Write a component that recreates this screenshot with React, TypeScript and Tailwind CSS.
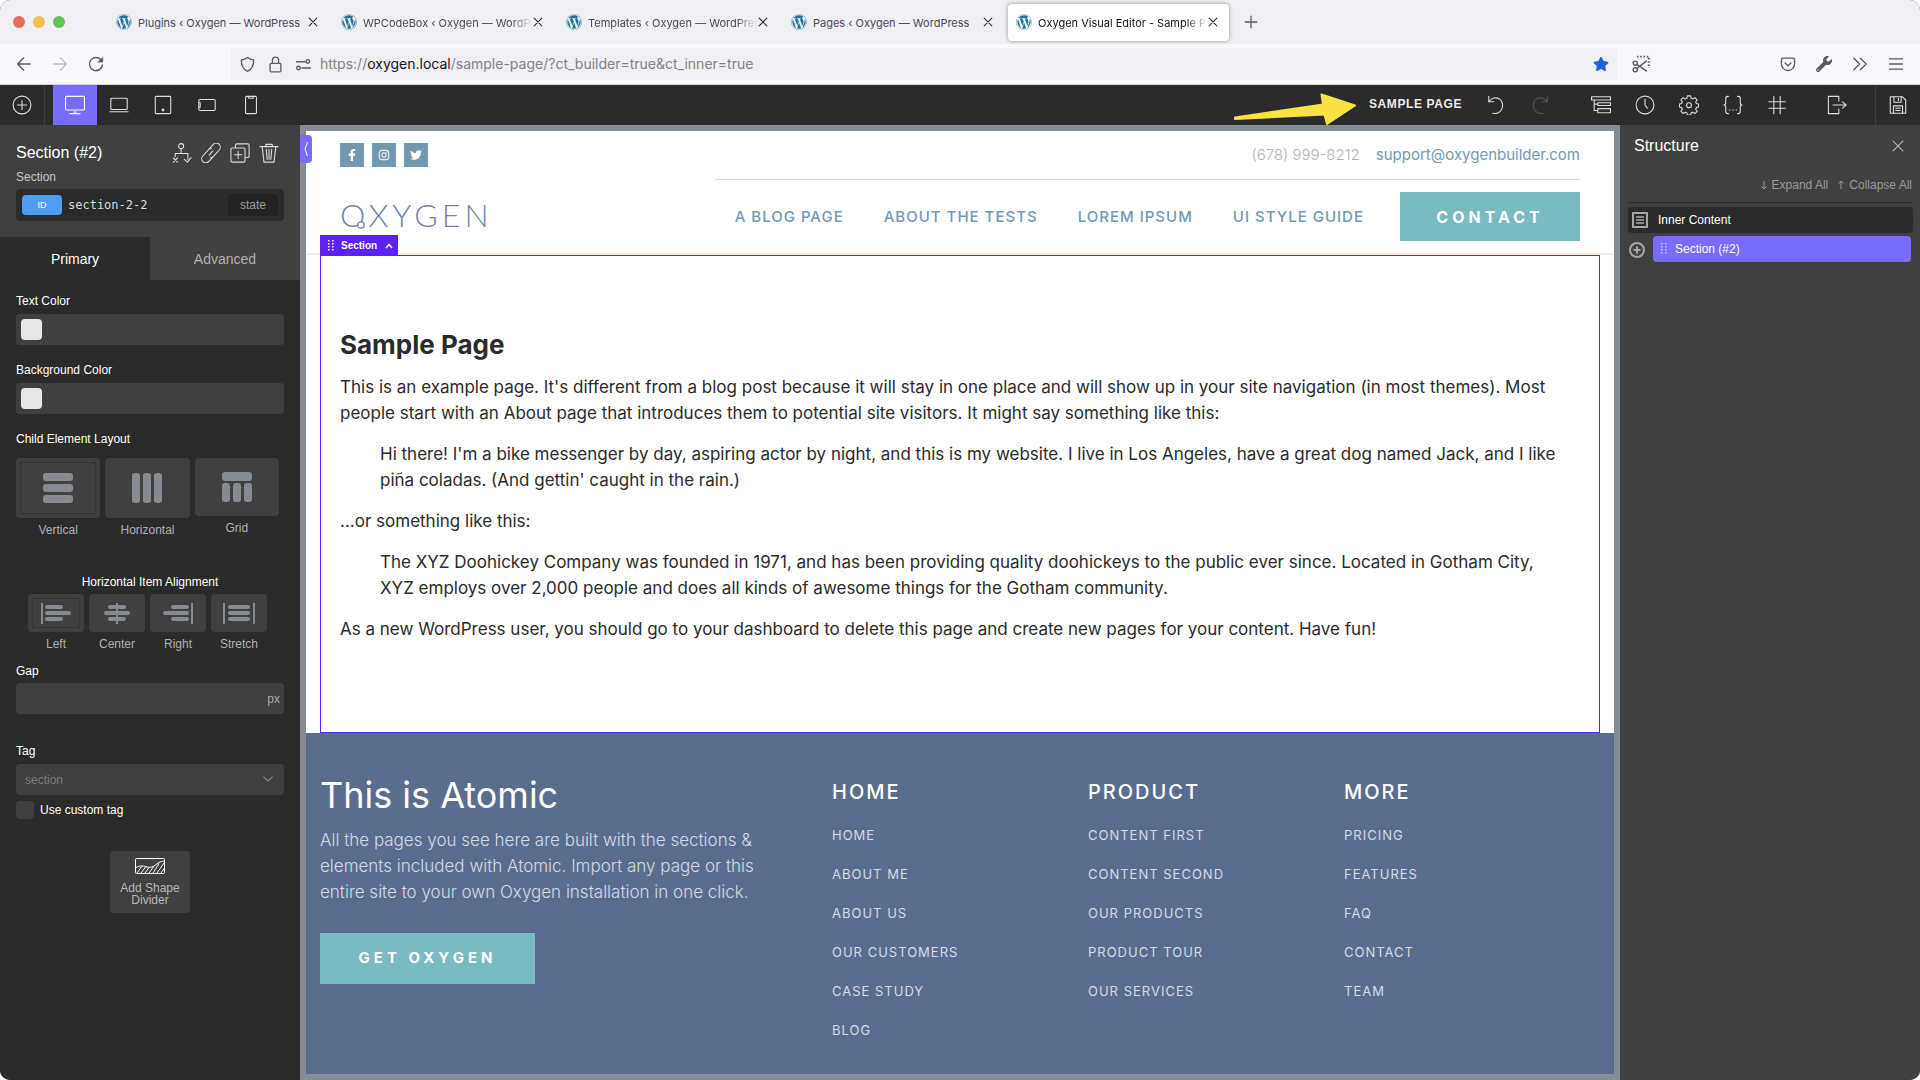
import React from "react";
import { FaWordpress, FaFacebookF, FaInstagram, FaTwitter, FaWrench, FaStar } from "react-icons/fa";

type IconProps = { d: React.ReactNode; size?: string; sw?: number };

function Icon({ d, size = "size-[22px]", sw = 1.2 }: IconProps) {
  return (
    <svg viewBox="0 0 22 22" className={`${size} shrink-0`} fill="none" stroke="currentColor" strokeWidth={sw} strokeLinecap="round" strokeLinejoin="round" aria-hidden="true">
      {d}
    </svg>
  );
}

const tabs = [
  { title: "Plugins ‹ Oxygen — WordPress", active: false, long: false },
  { title: "WPCodeBox ‹ Oxygen — WordPress", active: false, long: true },
  { title: "Templates ‹ Oxygen — WordPress", active: false, long: true },
  { title: "Pages ‹ Oxygen — WordPress", active: false, long: false },
  { title: "Oxygen Visual Editor - Sample Page", active: true, long: true },
];

function TabStrip() {
  return (
    <div className="flex h-11 items-center bg-[#f0eff4] pl-[13px]">
      <div className="mr-[43px] flex gap-2">
        <span className="size-3 rounded-full bg-[#ed6a5e]" />
        <span className="size-3 rounded-full bg-[#f5bf4f]" />
        <span className="size-3 rounded-full bg-[#61c554]" />
      </div>
      <div className="flex gap-1">
        {tabs.map((t) => (
          <div
            key={t.title}
            className={
              t.active
                ? "flex h-[37px] w-[221px] items-center rounded bg-white pl-2 pr-2.5 text-[#15141a] shadow-[0_0_4px_rgba(0,0,0,0.4)]"
                : "flex h-[37px] w-[221px] items-center rounded pl-2 pr-2.5 text-[#4c4b55]"
            }
          >
            <FaWordpress className="size-4 shrink-0 text-[#21759b]" />
            <span
              className={
                t.long
                  ? "ml-1.5 flex-1 overflow-hidden whitespace-nowrap pt-0.5 text-[11px] leading-4 [mask-image:linear-gradient(to_right,black_88%,transparent)]"
                  : "ml-1.5 flex-1 overflow-hidden whitespace-nowrap pt-0.5 text-[11px] leading-4"
              }
            >
              {t.title}
            </span>
            <button aria-label="Close tab" className="text-[#2b2a33]">
              <Icon size="size-3" sw={2} d={<path d="M4 4l14 14M18 4L4 18" />} />
            </button>
          </div>
        ))}
      </div>
      <button aria-label="New tab" className="ml-3.5 text-[#5b5b66]">
        <Icon size="size-4" sw={1.8} d={<path d="M11 3v16M3 11h16" />} />
      </button>
    </div>
  );
}

function AddressBar() {
  return (
    <div className="flex h-[41px] items-center border-b border-[#cfd2d2] bg-[#f9f9fb] pl-3.5 pr-4 text-[#5b5b66]">
      <button aria-label="Back"><Icon size="size-5" sw={1.6} d={<path d="M18 11H4M10.500 4.500L4 11l6.500 6.500" />} /></button>
      <button aria-label="Forward" className="ml-4 text-[#bfbfc9]"><Icon size="size-5" sw={1.6} d={<path d="M4 11h14M11.500 4.500L18 11l-6.500 6.500" />} /></button>
      <button aria-label="Reload" className="ml-4"><Icon size="size-5" sw={1.6} d={<><path d="M17 7A7.200 7.200 0 1 0 18.200 12" /><path d="M18.500 3.500v5.500H13z" fill="currentColor" strokeWidth="0.500" /></>} /></button>
      <div className="ml-[125px] flex h-8 flex-1 items-center rounded bg-[#f0eff4] px-2">
        <Icon size="size-[17px]" sw={1.7} d={<path d="M11 2c2.500 2 5 2.700 8 2.900.200 6.800-1.800 12-8 15.100C4.800 16.900 2.800 11.700 3 4.900 6 4.700 8.500 4 11 2z" />} />
        <span className="ml-[11px]"><Icon size="size-[17px]" sw={1.7} d={<><rect x="4" y="9.500" width="14" height="11" rx="1.500" /><path d="M7 9.500V5.500a4 4 0 0 1 8 0v4" /></>} /></span>
        <span className="ml-[11px]"><Icon size="size-[17px]" sw={1.8} d={<><path d="M2 7.500h11M9 15.500h11" /><circle cx="16.500" cy="7" r="2.300" /><circle cx="4.500" cy="15.500" r="2.300" /></>} /></span>
        <div role="textbox" aria-label="Address" className="ml-2 flex-1 text-sm leading-5 text-[#84838b]">
          https://<span className="text-[#15141a]">oxygen.local</span>/sample-page/?ct_builder=true&amp;ct_inner=true
        </div>
        <button aria-label="Bookmark" className="text-[#2060df]"><FaStar className="size-4" /></button>
      </div>
      <div className="ml-[15px] flex w-[272px] shrink-0 items-center justify-between">
        <button aria-label="Web clipper"><Icon size="size-[18px]" sw={1.8} d={<><circle cx="4" cy="10" r="2.500" /><circle cx="4" cy="18" r="2.500" /><path d="M6 11.500L17.500 19.500M6 16.500L17.500 7.500" /><path d="M6 2h14.500v14" strokeDasharray="2 2" strokeLinecap="butt" strokeWidth="2.400" /></>} /></button>
        <div className="flex items-center gap-5">
          <button aria-label="Pocket"><Icon size="size-4" sw={1.9} d={<><path d="M3.500 3h15A1.500 1.500 0 0 1 20 4.500V11a9 9 0 0 1-18 0V4.500A1.500 1.500 0 0 1 3.500 3z" /><path d="M7 9.500l4 4 4-4" /></>} /></button>
          <button aria-label="Developer tools"><FaWrench className="size-4" /></button>
          <button aria-label="More tools"><Icon size="size-4" sw={1.9} d={<path d="M2.500 3l8 8-8 8M11.500 3l8 8-8 8" />} /></button>
          <button aria-label="Menu"><Icon size="size-4" sw={1.9} d={<path d="M2 4h18M2 11h18M2 18h18" />} /></button>
        </div>
      </div>
    </div>
  );
}

const devices = [
  { name: "Desktop", d: <><rect x="0.600" y="1.500" width="20.800" height="15" rx="1" /><path d="M5.500 20.500h11M10 18.800h2" /></> },
  { name: "Laptop", d: <><rect x="2" y="3.500" width="18" height="12.500" rx="1" /><path d="M1 18.500h20" /></> },
  { name: "Tablet", d: <><rect x="2.500" y="1.500" width="17" height="19" rx="1" /><circle cx="11" cy="16.500" r="1" fill="currentColor" /></> },
  { name: "Phone landscape", d: <><rect x="2" y="5" width="18" height="12" rx="1.200" /><path d="M2 8.500h1.500v5H2" /></> },
  { name: "Phone portrait", d: <><rect x="5" y="1.500" width="12" height="19" rx="1.200" /><path d="M8.500 1.500v2h5v-2" /></> },
];

const panels = [
  { name: "Structure", d: <><path d="M0.600 2h20.800v3.500H0.600z" /><path d="M7.500 8.500h13.900v3H7.500zM7.500 15h13.900v4.500H7.500zM3.500 5.500V17M3.500 10h4M3.500 17h4" /></> },
  { name: "History", d: <><circle cx="11" cy="11" r="9.800" /><path d="M11 4.500V11l2.500 3.500" /></> },
  { name: "Settings", d: <><path d="M9.200 1h3.600l.6 2.700 1.700.7 2.400-1.500 2.400 2.500-1.500 2.300.7 1.700 2.400.6v3.300l-2.400.6-.7 1.700 1.500 2.400-2.400 2.400-2.400-1.500-1.700.700-.6 2.400H9.200l-.6-2.400-1.700-.7-2.400 1.500-2.400-2.400 1.500-2.400-.7-1.700L.500 13.300V10l2.400-.6.7-1.700-1.500-2.300 2.400-2.500 2.400 1.500 1.700-.700z" /><circle cx="11" cy="11.300" r="2.700" /></> },
  { name: "Stylesheets", d: <><path d="M6 1.500H5Q3 1.500 3 4v4.500Q3 11 1 11 3 11 3 13.500V18q0 2.500 2 2.500h1M16 1.500h1q2 0 2 2.500v4.500q0 2.500 2 2.500-2 0-2 2.500V18q0 2.500-2 2.500h-1" /><path d="M7 16.500h.5M10.800 16.500h.5M14.500 16.500h.5" /></> },
  { name: "Grid", d: <path d="M7.500 1.500v19M14.500 1.500v19M2 7.500h18M2 14.500h18" /> },
];

function BuilderBar() {
  return (
    <div className="flex h-10 items-center bg-[#2b2b2b] text-[#dcdcdc]">
      <button aria-label="Add element" className="flex h-10 w-[45px] items-center justify-center border-r border-[#3a3f44]">
        <Icon size="size-5" d={<><circle cx="11" cy="11" r="9.800" /><path d="M11 6v10M6 11h10" /></>} />
      </button>
      <div className="ml-2 flex">
        {devices.map((v, i) => (
          <button key={v.name} aria-label={v.name} className={i === 0 ? "flex h-10 w-11 items-center justify-center bg-[#7a6cfb] text-white" : "flex h-10 w-11 items-center justify-center"}>
            <Icon size="size-5" d={v.d} />
          </button>
        ))}
      </div>
      <svg viewBox="0 0 124 40" className="ml-auto mr-3 h-10 w-[124px]" fill="#fbe243" stroke="#fbe243" strokeWidth="2" strokeLinejoin="round" aria-hidden="true">
        <path d="M2 32.500L90 19.500L88.500 9.500L122 20.500L94 39L91.500 29.500L2 34z" />
      </svg>
      <span className="w-[105px] pb-0.5 font-['Liberation_Sans'] text-xs font-bold leading-4 tracking-wider text-[#ececec]">SAMPLE PAGE</span>
      <button aria-label="Undo" className="flex w-11 justify-center"><Icon size="size-5" d={<path d="M3 1.500v6H8.500M3 7.500C6 3 11 2 15 4.500c5 4 4 12-1.500 15q-3 1.500-6 .5" />} /></button>
      <button aria-label="Redo" className="flex w-11 justify-center text-[#555]"><Icon size="size-5" d={<path d="M19 1.500v6H13.500M19 7.500C16 3 11 2 7 4.500c-5 4-4 12 1.500 15q3 1.500 6 .5" />} /></button>
      <div className="ml-[17px] flex">
        {panels.map((p) => (
          <button key={p.name} aria-label={p.name} className="flex w-11 justify-center"><Icon size="size-5" d={p.d} /></button>
        ))}
      </div>
      <button aria-label="Exit" className="ml-4 flex w-11 justify-center"><Icon size="size-5" d={<><path d="M13 6.500v-5H1.500v19H13v-5" /><path d="M6.500 11H21M17 7.500L21 11l-4 3.500" /></>} /></button>
      <button aria-label="Save" className="ml-4 flex h-10 w-[45px] items-center justify-center border-l border-[#3a3f44]">
        <Icon size="size-5" d={<><path d="M2.500 2h13.500l3.500 3.500V20h-17z" /><path d="M6.500 2v6h8V2M11.500 3.500v2.500M6 20v-8h10v8M8.500 14.500h5M8.500 17h5" /></>} />
      </button>
    </div>
  );
}

const layouts = [
  { name: "Vertical", box: "h-[60px]", d: <><rect x="0" y="0" width="30" height="8" rx="3" /><rect x="0" y="11" width="30" height="8" rx="3" /><rect x="0" y="22" width="30" height="8" rx="3" /></> },
  { name: "Horizontal", box: "h-[60px]", d: <><rect x="0" y="0" width="8" height="30" rx="3" /><rect x="11" y="0" width="8" height="30" rx="3" /><rect x="22" y="0" width="8" height="30" rx="3" /></> },
  { name: "Grid", box: "h-[58px]", d: <><rect x="0" y="0" width="30" height="9" rx="3" /><rect x="0" y="11" width="8" height="19" rx="3" /><rect x="11" y="11" width="8" height="19" rx="3" /><rect x="22" y="11" width="8" height="19" rx="3" /></> },
];

const aligns = [
  { name: "Left", d: <><path d="M1 0h2v21H1z" /><rect x="5" y="2" width="18" height="4" rx="2" /><rect x="5" y="8" width="26" height="4" rx="2" /><rect x="5" y="14" width="18" height="4" rx="2" /></> },
  { name: "Center", d: <><path d="M15 0h2v21h-2z" /><rect x="7" y="2" width="18" height="4" rx="2" /><rect x="3" y="8" width="26" height="4" rx="2" /><rect x="7" y="14" width="18" height="4" rx="2" /></> },
  { name: "Right", d: <><path d="M29 0h2v21h-2z" /><rect x="9" y="2" width="18" height="4" rx="2" /><rect x="1" y="8" width="26" height="4" rx="2" /><rect x="9" y="14" width="18" height="4" rx="2" /></> },
  { name: "Stretch", d: <><path d="M0 0h2v21H0zM30 0h2v21h-2z" /><rect x="5" y="2" width="22" height="4" rx="2" /><rect x="5" y="8" width="22" height="4" rx="2" /><rect x="5" y="14" width="22" height="4" rx="2" /></> },
];

function ColorField({ id, label }: { id: string; label: string }) {
  return (
    <div className="mb-[17px]">
      <label htmlFor={id} className="mb-[5px] block">{label}</label>
      <div className="flex h-[31px] items-center rounded bg-[#404040] pl-[5px]">
        <button aria-label={`Pick ${label}`} className="size-[21px] shrink-0 rounded bg-[#e8e8ea]" />
        <input id={id} className="ml-2 w-full bg-transparent outline-none" />
      </div>
    </div>
  );
}

function PropertiesPanel() {
  return (
    <aside className="w-[300px] shrink-0 bg-[#2b2b2b] font-['Liberation_Sans'] text-xs leading-4 text-white">
      <div className="bg-[#404040]">
        <div className="px-4 py-4">
          <div className="flex items-center justify-between pr-[5px]">
            <h2 className="text-base leading-6">Section (#2)</h2>
            <div className="flex gap-[9px] text-[#dcdcdc]">
              <button aria-label="Conditions"><Icon size="size-5" d={<><circle cx="10" cy="3.500" r="2.800" /><path d="M10 6.500v5M3.500 15v-3.500h14V18M1.500 16.500l4.500 4.500M6 16.500L1.500 21M13.500 18l3.500 3 4-5" /></>} /></button>
              <button aria-label="Link"><Icon size="size-5" d={<g transform="rotate(-48 11 11)"><path d="M10 15.500H2.500a4.500 4.500 0 0 1 0-9H12q2 0 3 1.500M12 6.500h7.500a4.500 4.500 0 0 1 0 9H10q-2 0-3-1.500M8 11h6" /></g>} /></button>
              <button aria-label="Duplicate"><Icon size="size-5" d={<><rect x="1" y="5.500" width="15.500" height="15.500" rx="1.500" /><path d="M6 5V2.500q0-1.500 1.500-1.500H19.500q1.500 0 1.500 1.500v12q0 1.500-1.500 1.500h-2.500M9 9v8M5 13h8" /></>} /></button>
              <button aria-label="Delete"><Icon size="size-5" d={<><path d="M1 4h20M7.500 4V1.500h7V4M3.500 4l2 17h11l2-17M8 7l1 11M11 7v11M14 7l-1 11" /></>} /></button>
            </div>
          </div>
          <p className="mt-1 text-[#c8c8c8]">Section</p>
          <div className="mt-1 flex h-8 items-center rounded bg-[#2b2b2b] px-1.5">
            <label htmlFor="selector" className="flex h-5 w-10 items-center justify-center rounded bg-[#4a9ff0] text-[9px]">ID</label>
            <input id="selector" defaultValue="section-2-2" className="ml-1.5 min-w-0 flex-1 bg-transparent font-['DejaVu_Sans_Mono'] text-[#dcdcdc] outline-none" />
            <button className="h-[22px] w-[50px] rounded bg-[#222] text-[#9a9a9a]">state</button>
          </div>
        </div>
        <div className="flex h-[43px] text-sm">
          <button className="flex-1 bg-[#2b2b2b]">Primary</button>
          <button className="flex-1 text-[#b0b0b0]">Advanced</button>
        </div>
      </div>
      <div className="flex flex-col px-4 pt-[13px]">
        <ColorField id="text-color" label="Text Color" />
        <ColorField id="bg-color" label="Background Color" />
        <p className="mb-[11px]">Child Element Layout</p>
        <div className="mr-[5px] flex gap-[5px]">
          {layouts.map((l, i) => (
            <button key={l.name} className="flex flex-1 flex-col text-[#b0b0b0]">
              <span className={`${l.box} flex w-full items-center justify-center rounded bg-[#404040] p-1`}>
                <span className={i === 0 ? "flex h-full w-full items-center justify-center border border-dotted border-[#2b2b2b]" : "flex"}>
                  <svg viewBox="0 0 30 30" className="size-[30px]" fill="#858b90" aria-hidden="true">{l.d}</svg>
                </span>
              </span>
              <span className="mt-1 w-full text-center">{l.name}</span>
            </button>
          ))}
        </div>
        <p className="mt-9 text-center">Horizontal Item Alignment</p>
        <div className="ml-3 mt-1 flex gap-[5px]">
          {aligns.map((a, i) => (
            <button key={a.name} className="w-14 text-[#b0b0b0]">
              <span className="flex h-[38px] w-full items-center justify-center rounded bg-[#404040] p-1">
                <span className={i === 0 ? "flex h-full w-full items-center justify-center border border-[#363636]" : "flex"}>
                  <svg viewBox="0 0 32 21" className="h-[21px] w-8" fill="#858b90" aria-hidden="true">{a.d}</svg>
                </span>
              </span>
              <span className="mt-1 block">{a.name}</span>
            </button>
          ))}
        </div>
        <label htmlFor="gap" className="mt-[11px]">Gap</label>
        <div className="mt-1 flex h-[31px] items-center rounded bg-[#404040] px-1">
          <input id="gap" className="min-w-0 flex-1 bg-transparent outline-none" />
          <span className="text-[#a8a8a8]">px</span>
        </div>
        <label htmlFor="tag" className="mt-[29px]">Tag</label>
        <div className="relative mt-[5px] flex">
          <select id="tag" className="h-[31px] flex-1 appearance-none rounded bg-[#404040] pl-[9px] text-[#7d7d7d] outline-none">
            <option>section</option>
          </select>
          <span className="pointer-events-none absolute right-[11px] top-2.5 text-[#8a8a8a]">
            <Icon size="size-2.5" sw={2.4} d={<path d="M1.500 7l9.500 8 9.500-8" />} />
          </span>
        </div>
        <div className="mt-1.5 flex items-center">
          <input id="custom-tag" type="checkbox" className="size-[18px] appearance-none rounded bg-[#404040]" />
          <label htmlFor="custom-tag" className="ml-1.5">Use custom tag</label>
        </div>
        <button className="mt-8 flex w-20 flex-col items-center gap-2 self-center rounded bg-[#404040] px-2 pb-[7px] pt-[7px] leading-3 text-[#b8b8b8]">
          <svg viewBox="0 0 30 16" className="h-4 w-[30px] text-white" fill="none" stroke="currentColor" aria-hidden="true">
            <rect x="0.500" y="0.500" width="29" height="15" rx="1" />
            <path d="M1 9.500C5 7 9 8 12 9s6 0 9-2.500 5-3 8.500-3.500M2 15l5-7M6 15l5-6.500M10 15l4-5.500M14 15l5-7M18 15l6-9.500M22 15l7-10M26 15l3.500-5" />
          </svg>
          <span>Add Shape Divider</span>
        </button>
      </div>
    </aside>
  );
}

const navItems = ["A BLOG PAGE", "ABOUT THE TESTS", "LOREM IPSUM", "UI STYLE GUIDE"];

const social = [
  { name: "Facebook", I: FaFacebookF },
  { name: "Instagram", I: FaInstagram },
  { name: "Twitter", I: FaTwitter },
];

function SiteHeader() {
  return (
    <header className="flex justify-between border-b-2 border-[#eeeeee] px-[34px]">
      <div>
        <div className="flex h-12 items-center gap-2">
          {social.map(({ name, I }) => (
            <a key={name} href="#" aria-label={name} className="flex size-6 items-center justify-center bg-[#7399b1] text-white"><I className="size-3" /></a>
          ))}
        </div>
        <a href="#" className="relative flex h-[72px] items-center font-['Lato'] text-[32px] font-light leading-8 tracking-[4px] text-[#7385a8]">
          OXYGEN
          <svg viewBox="0 0 8 8" className="absolute left-[17px] top-[42px] size-2" fill="white" stroke="currentColor" strokeWidth="1.300" aria-hidden="true"><circle cx="4" cy="4" r="3.200" /></svg>
        </a>
      </div>
      <div>
        <div className="flex h-[49px] items-center justify-end gap-4 border-b border-[#dcdcdc] text-[15px]">
          <span className="font-light text-[#b3b3b3]">(678) 999-8212</span>
          <a href="#" className="text-[#7399b1]">support@oxygenbuilder.com</a>
        </div>
        <div className="flex h-[73px] items-center">
          <nav className="flex">
            {navItems.map((n) => (
              <a key={n} href="#" className="px-5 text-[15px] font-medium leading-6 tracking-[1px] text-[#7399b1]">{n}</a>
            ))}
          </nav>
          <a href="#" className="ml-4 flex h-[49px] w-[180px] items-center justify-center bg-[#7abbc1] text-base font-bold tracking-[4px] text-white">CONTACT</a>
        </div>
      </div>
    </header>
  );
}

const columns = [
  { title: "HOME", links: ["HOME", "ABOUT ME", "ABOUT US", "OUR CUSTOMERS", "CASE STUDY", "BLOG"] },
  { title: "PRODUCT", links: ["CONTENT FIRST", "CONTENT SECOND", "OUR PRODUCTS", "PRODUCT TOUR", "OUR SERVICES"] },
  { title: "MORE", links: ["PRICING", "FEATURES", "FAQ", "CONTACT", "TEAM"] },
];

function Canvas() {
  return (
    <main className="relative flex min-w-0 flex-1 flex-col bg-[#868c93] p-1.5 font-['Inter']">
      <button aria-label="Collapse panel" className="absolute left-0 top-2.5 flex h-7 w-3 items-center justify-center rounded-r bg-[#7a6cfb] text-white">
        <svg viewBox="0 0 6 16" className="h-4 w-1.5" fill="none" stroke="currentColor" aria-hidden="true"><path d="M4.500 1L2 8l2.500 7" /></svg>
      </button>
      <div className="flex flex-1 flex-col bg-white">
        <SiteHeader />
        <section className="relative mx-3.5 border border-[#5b21f5] px-[19px] pb-[90px] pt-[69px] text-[17px] leading-[26px] text-[#2b2b2b]">
          <button className="absolute -left-px -top-[21px] flex h-[21px] w-[78px] items-center bg-[#5b21f5] pl-2 font-['Liberation_Sans'] text-[10px] font-bold leading-4 text-white">
            <svg viewBox="0 0 6 12" className="h-3 w-1.5" fill="white" aria-hidden="true">
              {[0, 3, 6, 9].map((y) => <g key={y}><rect x="0" y={y} width="1.500" height="1.500" /><rect x="4" y={y} width="1.500" height="1.500" /></g>)}
            </svg>
            <span className="ml-[7px]">Section</span>
            <svg viewBox="0 0 8 6" className="ml-2 h-1.5 w-2" fill="none" stroke="white" strokeWidth="1.600" aria-hidden="true"><path d="M1 5l3-3.500L7 5" /></svg>
          </button>
          <h1 className="text-[26px] font-bold leading-10">Sample Page</h1>
          <p className="mt-[9px]">This is an example page. It's different from a blog post because it will stay in one place and will show up in your site navigation (in most themes). Most people start with an About page that introduces them to potential site visitors. It might say something like this:</p>
          <blockquote className="ml-10 mr-2 mt-[15px]">Hi there! I'm a bike messenger by day, aspiring actor by night, and this is my website. I live in Los Angeles, have a great dog named Jack, and I like piña coladas. (And gettin' caught in the rain.)</blockquote>
          <p className="mt-[15px]">…or something like this:</p>
          <blockquote className="ml-10 mr-2 mt-[15px]">The XYZ Doohickey Company was founded in 1971, and has been providing quality doohickeys to the public ever since. Located in Gotham City, XYZ employs over 2,000 people and does all kinds of awesome things for the Gotham community.</blockquote>
          <p className="mt-[15px]">As a new WordPress user, you should go to your dashboard to delete this page and create new pages for your content. Have fun!</p>
        </section>
        <footer className="grid flex-1 grid-cols-5 bg-[#5b6d8e] px-3.5 pt-9 text-white">
          <div className="col-span-2 pr-11">
            <h2 className="text-4xl leading-[52px]">This is Atomic</h2>
            <p className="mt-1.5 text-[17px] font-light leading-[26px] text-[#d4dae3]">All the pages you see here are built with the sections &amp; elements included with Atomic. Import any page or this entire site to your own Oxygen installation in one click.</p>
            <a href="#" className="mt-7 flex h-[51px] w-[215px] items-center justify-center bg-[#7abbc1] text-[15px] font-bold tracking-[4px]">GET OXYGEN</a>
          </div>
          {columns.map((c) => (
            <div key={c.title}>
              <h3 className="mt-[9px] text-xl font-medium leading-7 tracking-[2px]">{c.title}</h3>
              <ul className="mt-[17px] flex flex-col gap-[15px]">
                {c.links.map((l) => (
                  <li key={l} className="flex"><a href="#" className="text-[13px] leading-6 tracking-[1px] text-[#d4dae3]">{l}</a></li>
                ))}
              </ul>
            </div>
          ))}
        </footer>
      </div>
    </main>
  );
}

function StructurePanel() {
  return (
    <aside className="w-[300px] shrink-0 bg-[#404040] pl-2 pr-[7px] font-['Liberation_Sans'] text-xs leading-4 text-white">
      <div className="flex items-center justify-between pl-1.5 pr-[9px] pt-[9px]">
        <h2 className="text-base leading-6">Structure</h2>
        <button aria-label="Close structure" className="text-[#b8b8b8]"><Icon size="size-3" sw={2} d={<path d="M2 2l18 18M20 2L2 20" />} /></button>
      </div>
      <div className="mt-[19px] flex justify-end gap-2.5 border-b border-[#2b2b2b] pb-[9px] pr-px text-[#9a9a9a]">
        {["Expand All", "Collapse All"].map((t, i) => (
          <button key={t} className="flex items-center gap-[5px]">
            <svg viewBox="0 0 6 10" className="h-2.5 w-1.5" fill="none" stroke="currentColor" aria-hidden="true"><path d={i === 0 ? "M3 1v8M0.500 6.500L3 9l2.500-2.500" : "M3 9V1M0.500 3.500L3 1l2.500 2.500"} /></svg>
            {t}
          </button>
        ))}
      </div>
      <div className="mt-1 flex h-[26px] items-center rounded bg-[#2b2b2b] pl-1">
        <svg viewBox="0 0 16 16" className="size-4" fill="none" stroke="#a6a6a6" aria-hidden="true"><rect x="1" y="1" width="14" height="14" strokeWidth="2" /><path d="M4 5h8M4 8h8M4 11h8" strokeWidth="1.600" /></svg>
        <span className="ml-2.5">Inner Content</span>
      </div>
      <div className="mt-[3px] flex items-center pr-0.5">
        <button aria-label="Add to section"><svg viewBox="0 0 16 16" className="ml-px mt-0.5 size-4" fill="none" stroke="#a6a6a6" strokeWidth="2" aria-hidden="true"><circle cx="8" cy="8" r="7" /><path d="M8 4.500v7M4.500 8h7" /></svg></button>
        <button className="ml-2 flex h-[26px] flex-1 items-center rounded bg-[#7a6cfb] pl-2">
          <svg viewBox="0 0 6 12" className="h-3 w-1.5" fill="#c9c4fd" aria-hidden="true">
            {[0, 3, 6, 9].map((y) => <g key={y}><rect x="0" y={y} width="1.500" height="1.500" /><rect x="4" y={y} width="1.500" height="1.500" /></g>)}
          </svg>
          <span className="ml-2">Section (#2)</span>
        </button>
      </div>
    </aside>
  );
}

export default function App() {
  return (
    <div className="flex min-h-screen flex-col overflow-hidden rounded-[10px] bg-[#404040] font-['Inter']">
      <TabStrip />
      <AddressBar />
      <BuilderBar />
      <div className="flex flex-1">
        <PropertiesPanel />
        <Canvas />
        <StructurePanel />
      </div>
    </div>
  );
}
